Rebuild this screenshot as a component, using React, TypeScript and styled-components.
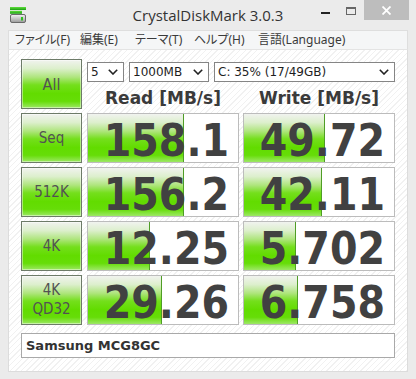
import React from 'react'
import styled, {createGlobalStyle} from 'styled-components'

const GlobalStyle = createGlobalStyle`
    html, body {
        margin: 0;
        padding: 0;
        background: #ebebeb;
    }
    body {
        font-family: "DejaVu Sans", Verdana, sans-serif;
    }
`

const menus = [
    {label: 'ファイル(F)', w: 65},
    {label: '編集(E)', w: 55},
    {label: 'テーマ(T)', w: 59},
    {label: 'ヘルプ(H)', w: 64},
    {label: '言語(Language)', w: 0},
]

const rows = [
    {label: ['Seq'], read: 158.1, write: 49.72, rt: '158.1', wt: '49.72'},
    {label: ['512K'], read: 156.2, write: 42.11, rt: '156.2', wt: '42.11'},
    {label: ['4K'], read: 12.25, write: 5.702, rt: '12.25', wt: '5.702'},
    {label: ['4K', 'QD32'], read: 29.26, write: 6.758, rt: '29.26', wt: '6.758'},
]

// bar length grows with log10 of the score
const barWidth = (v: number) => Math.round(27.7 + 30.6 * Math.log10(v))

const green = `linear-gradient(to bottom,
    #f1f3ef 0%,
    #dcefcc 18%,
    #aee57c 36%,
    #74df1c 52%,
    #62dc00 70%,
    #66dd08 86%,
    #9de865 100%)`

const Window = styled.div`
    width: 416px;
    height: 379px;
    background: #ebebeb;
    display: flex;
    flex-direction: column;
    overflow: hidden;
`

const TitleBar = styled.div`
    height: 30px;
    flex: none;
    display: grid;
    grid-template-columns: 1fr auto 1fr;
    align-items: start;
`

const TitleLeft = styled.div`
    padding: 7px 0 0 10px;
`

const Title = styled.div`
    font-family: "Open Sans", "Noto Sans", sans-serif;
    font-size: 15px;
    line-height: 30px;
    color: #333;
    white-space: nowrap;
`

const Controls = styled.div`
    display: flex;
    justify-content: flex-end;
    padding-right: 7px;
`

const CtrlButton = styled.div<{ $top: number }>`
    width: 26px;
    height: 20px;
    box-sizing: border-box;
    padding-top: ${(p) => p.$top}px;
    display: flex;
    justify-content: center;
    align-items: flex-start;
`

const MinGlyph = styled.div`
    width: 9px;
    height: 2px;
    background: #222;
`

const MaxGlyph = styled.div`
    width: 10px;
    height: 8px;
    box-sizing: border-box;
    border: 1px solid #666;
    border-top-width: 2px;
`

const CloseButton = styled.div`
    width: 45px;
    height: 20px;
    background: #bdbdbd;
    display: flex;
    align-items: center;
    justify-content: center;
`

const Frame = styled.div`
    flex: 1;
    display: flex;
    flex-direction: column;
    padding: 0 8px 7px;
`

const MenuBar = styled.div`
    height: 20px;
    box-sizing: border-box;
    display: flex;
    padding-left: 6px;
    background: #f5f6f7;
    border: 1px solid #dedede;
    border-bottom-color: #e4e4e4;
    font-family: "Noto Sans", "Noto Sans CJK JP", sans-serif;
    font-size: 12px;
    line-height: 18px;
    color: #3a3a3a;
    font-feature-settings: "palt";
`

const MenuItem = styled.div<{ $w: number }>`
    flex: none;
    width: ${(p) => (p.$w ? `${p.$w}px` : 'auto')};
    white-space: nowrap;
`

const Client = styled.div`
    flex: 1;
    background-color: #fff;
    background-image: repeating-linear-gradient(135deg, #ffffff 0 3px, #f1f1f1 3px 4px);
    border: 1px solid #dcdcdc;
    border-top: none;
    padding: 9px 0 0 12px;
`

const Board = styled.div`
    display: grid;
    grid-template-columns: 62px 152px 152px;
    grid-template-rows: repeat(5, 50px) 29px;
    column-gap: 4px;
    row-gap: 4px;
`

const TestButton = styled.div<{ $big?: boolean }>`
    width: 61px;
    height: 50px;
    box-sizing: border-box;
    border: 1px solid #6d7b68;
    box-shadow: inset 0 0 0 1px rgba(255, 255, 255, 0.45);
    background: ${green};
    display: flex;
    flex-direction: column;
    align-items: center;
    justify-content: center;
    font-family: "DejaVu Sans Condensed", "DejaVu Sans", sans-serif;
    font-stretch: condensed;
    font-size: ${(p) => (p.$big ? 16 : 15)}px;
    line-height: 19px;
    color: #525252;
`

const TopPanel = styled.div`
    grid-column: 2 / 4;
    display: flex;
    flex-direction: column;
`

const Selects = styled.div`
    display: flex;
    gap: 5px;
    margin-top: 3px;
`

const Select = styled.div<{ $w: number }>`
    width: ${(p) => p.$w}px;
    height: 20px;
    box-sizing: border-box;
    border: 1px solid #858585;
    background: #fff;
    display: flex;
    align-items: center;
    justify-content: space-between;
    padding: 0 5px 0 3px;
    font-size: 12px;
    color: #1e1e1e;
    white-space: nowrap;
`

const Headers = styled.div`
    display: grid;
    grid-template-columns: 152px 152px;
    column-gap: 4px;
    margin-top: 5px;
`

const Header = styled.div`
    text-align: center;
    font-weight: bold;
    font-size: 17px;
    line-height: 22px;
    color: #3a3a3a;
    white-space: nowrap;
`

const ScoreBox = styled.div`
    position: relative;
    height: 50px;
    box-sizing: border-box;
    border: 1px solid #bcbcbc;
    background: #fff;
`

const Bar = styled.div`
    position: absolute;
    left: 0;
    top: 0;
    bottom: 0;
    background: ${green};
    border-right: 1px solid #4f9d26;
`

const Number = styled.div`
    position: relative;
    padding: 6px 9px 0 0;
    text-align: right;
    font-family: "DejaVu Sans Condensed", "DejaVu Sans", sans-serif;
    font-stretch: condensed;
    font-weight: bold;
    font-size: 44px;
    line-height: 42px;
    color: #414141;
`

const ModelBox = styled.div`
    grid-column: 1 / 4;
    margin-top: 4px;
    box-sizing: border-box;
    border: 1px solid #a9a9a9;
    background: #fff;
    display: flex;
    align-items: center;
    padding-left: 4px;
    font-weight: bold;
    font-size: 13px;
    color: #333;
`

const Chevron = () => (
    <svg width="10" height="6" viewBox="0 0 10 6">
        <path d="M0.8 0.8 L5 5 L9.2 0.8" fill="none" stroke="#222" strokeWidth="1.6"/>
    </svg>
)

const AppIcon = () => (
    <svg width="17" height="17" viewBox="0 0 17 17">
        <defs>
            <linearGradient id="g" x1="0" y1="0" x2="0" y2="1">
                <stop offset="0" stopColor="#5fe03a"/>
                <stop offset="1" stopColor="#1d9e14"/>
            </linearGradient>
            <linearGradient id="d" x1="0" y1="0" x2="0" y2="1">
                <stop offset="0" stopColor="#f4f4f4"/>
                <stop offset="1" stopColor="#9a9a9a"/>
            </linearGradient>
        </defs>
        <rect x="0" y="0" width="16" height="3" fill="url(#g)"/>
        <rect x="0" y="3.8" width="12" height="3" fill="url(#g)"/>
        <rect x="0.5" y="7.5" width="15" height="8" rx="1.5" fill="url(#d)" stroke="#6a6a6a"/>
        <rect x="11" y="10" width="2" height="3.5" fill="#2fbf22"/>
    </svg>
)

const Score = ({value, text}: { value: number; text: string }) => (
    <ScoreBox>
        <Bar style={{width: barWidth(value)}}/>
        <Number>{text}</Number>
    </ScoreBox>
)

export default function App() {
    return (
        <>
            <GlobalStyle/>
            <Window>
                <TitleBar>
                    <TitleLeft><AppIcon/></TitleLeft>
                    <Title>CrystalDiskMark 3.0.3</Title>
                    <Controls>
                        <CtrlButton $top={12}><MinGlyph/></CtrlButton>
                        <CtrlButton $top={7}><MaxGlyph/></CtrlButton>
                        <CloseButton>
                            <svg width="9" height="9" viewBox="0 0 9 9">
                                <path d="M0.5 0.5 L8.5 8.5 M8.5 0.5 L0.5 8.5" stroke="#fff" strokeWidth="1.8"/>
                            </svg>
                        </CloseButton>
                    </Controls>
                </TitleBar>
                <Frame>
                    <MenuBar>
                        {menus.map((m) => (
                            <MenuItem key={m.label} $w={m.w}>{m.label}</MenuItem>
                        ))}
                    </MenuBar>
                    <Client>
                        <Board>
                            <TestButton $big>All</TestButton>
                            <TopPanel>
                                <Selects>
                                    <Select $w={37}><span>5</span><Chevron/></Select>
                                    <Select $w={80}><span>1000MB</span><Chevron/></Select>
                                    <Select $w={181}><span>C: 35% (17/49GB)</span><Chevron/></Select>
                                </Selects>
                                <Headers>
                                    <Header>Read [MB/s]</Header>
                                    <Header>Write [MB/s]</Header>
                                </Headers>
                            </TopPanel>
                            {rows.map((r) => (
                                <React.Fragment key={r.label.join()}>
                                    <TestButton>
                                        {r.label.map((l) => <span key={l}>{l}</span>)}
                                    </TestButton>
                                    <Score value={r.read} text={r.rt}/>
                                    <Score value={r.write} text={r.wt}/>
                                </React.Fragment>
                            ))}
                            <ModelBox>Samsung MCG8GC</ModelBox>
                        </Board>
                    </Client>
                </Frame>
            </Window>
        </>
    )
}
